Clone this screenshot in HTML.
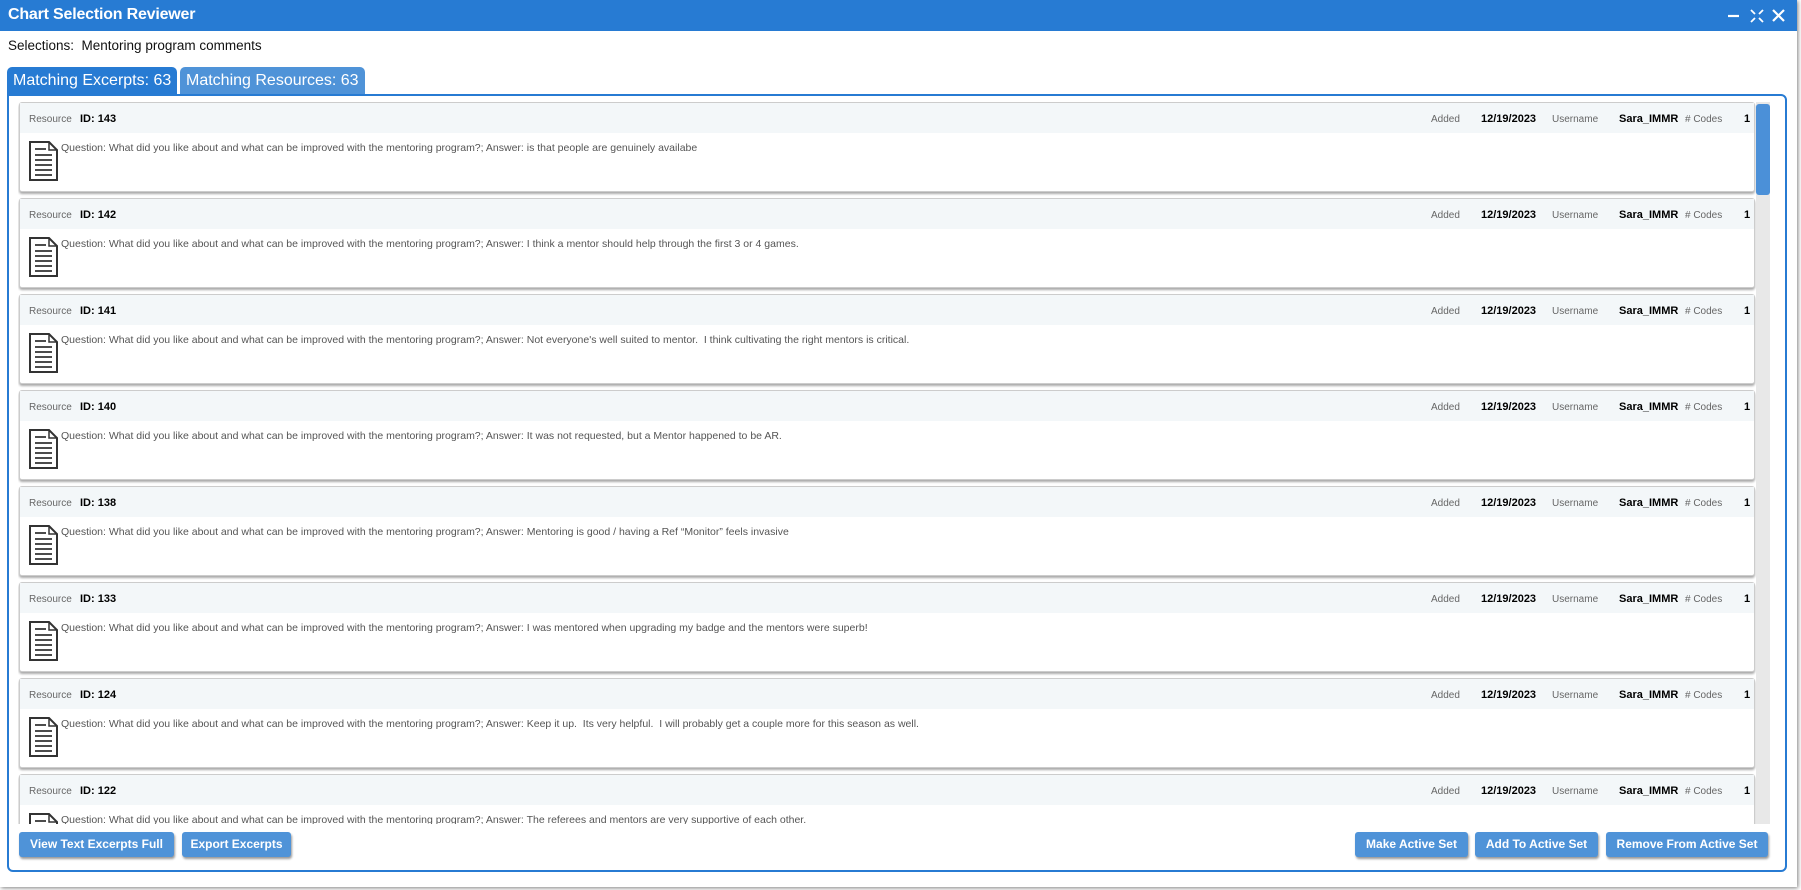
<!DOCTYPE html>
<html><head><meta charset="utf-8"><style>
*{box-sizing:border-box;margin:0;padding:0}
body{width:1801px;height:890px;overflow:hidden;background:#fff;font-family:"Liberation Sans",Arial,sans-serif;position:relative}
.dlg{position:absolute;left:0;top:0;width:1797px;height:887px;background:#fff;box-shadow:1px 1px 4px rgba(0,0,0,.5)}
.title{position:absolute;left:0;top:0;width:1797px;height:31px;background:#277bd3;color:#fff;font-size:16px;font-weight:bold;line-height:29px;padding-left:8px;letter-spacing:-0.2px}
.sel{position:absolute;left:8px;top:38px;font-size:13.5px;color:#111}
.tab{position:absolute;top:67px;height:27px;color:#fff;font-size:16px;line-height:28px;padding-left:6px;border-radius:5px 5px 0 0;white-space:nowrap}
.panel{position:absolute;left:7px;top:94px;width:1780px;height:778px;border:2px solid #277bd3;border-radius:0 6px 6px 6px}
.list{position:absolute;left:18px;top:102px;width:1738px;height:722px;overflow:hidden}
.card{position:absolute;left:1px;width:1736px;height:90px;border:1px solid #ccc;border-radius:3px;box-shadow:0 2px 2px #aaa;background:#fff}
.hd{height:30px;background:#f3f7f9;position:relative;font-size:10px;color:#666}
.hd span{position:absolute;top:11px}
.hd b{position:absolute;top:10px;font-size:11px;color:#000}
.q{position:absolute;left:41px;top:39px;font-size:10.5px;color:#555}
.ic{position:absolute;left:9px;top:38px}
.sb{position:absolute;left:1756px;top:102px;width:14px;height:722px;background:#e8e8e8}
.th{position:absolute;left:1756px;top:104px;width:14px;height:91px;background:#4b90d8;border-radius:3px}
.btn{position:absolute;top:832px;height:25px;background:#4f93d8;color:#fff;font-size:12px;font-weight:bold;line-height:25px;text-align:center;border-radius:3px;box-shadow:1px 2px 2px #999;white-space:nowrap}
</style></head><body>
<div class="dlg">
<div class="title">Chart Selection Reviewer
<svg style="position:absolute;left:1727px;top:8px" width="60" height="16" viewBox="0 0 60 16" stroke="#fff" stroke-width="2.2" fill="none"><path d="M1 8h11"/><path d="M24 2l4 4M36 2l-4 4M24 14l4-4M36 14l-4-4" stroke-width="1.8"/><path d="M46 2l11 11M57 2L46 13"/></svg></div>
<div class="sel">Selections:&nbsp; Mentoring program comments</div>
<div class="tab" style="left:7px;width:170px;background:#277bd3">Matching Excerpts: 63</div>
<div class="tab" style="left:180px;width:185px;background:#4f93d8">Matching Resources: 63</div>
<div class="panel"></div>
<div class="list">
</div>
<div class="sb"></div><div class="th"></div>
<div class="btn" style="left:19px;width:155px">View Text Excerpts Full</div>
<div class="btn" style="left:182px;width:109px">Export Excerpts</div>
<div class="btn" style="left:1355px;width:113px">Make Active Set</div>
<div class="btn" style="left:1475px;width:123px">Add To Active Set</div>
<div class="btn" style="left:1606px;width:162px">Remove From Active Set</div>
</div>
<script>
var d=[["143","is that people are genuinely availabe"],["142","I think a mentor should help through the first 3 or 4 games."],["141","Not everyone's well suited to mentor.&nbsp; I think cultivating the right mentors is critical."],["140","It was not requested, but a Mentor happened to be AR."],["138","Mentoring is good / having a Ref \u201cMonitor\u201d feels invasive"],["133","I was mentored when upgrading my badge and the mentors were superb!"],["124","Keep it up.&nbsp; Its very helpful.&nbsp; I will probably get a couple more for this season as well."],["122","The referees and mentors are very supportive of each other."]];
var h="";
d.forEach(function(r,i){h+='<div class="card" style="top:'+(96*i)+'px"><div class="hd"><span style="left:9px">Resource</span><b style="left:60px">ID: '+r[0]+'</b><span style="left:1411px">Added</span><b style="left:1461px">12/19/2023</b><span style="left:1532px">Username</span><b style="left:1599px">Sara_IMMR</b><span style="left:1665px"># Codes</span><b style="left:1724px">1</b></div>'+
'<svg class="ic" width="29" height="40" viewBox="0 0 29 40" fill="none" stroke="#333" stroke-width="2"><path d="M1 1h19l8 8v30H1z"/><path d="M20 1v8h8" stroke-width="1.5"/><path d="M6 8h11M6 14h17M6 19h17M6 24h17M6 29h17M6 34h17" stroke-width="1.8"/></svg>'+
'<div class="q">Question: What did you like about and what can be improved with the mentoring program?; Answer: '+r[1]+'</div></div>';});
document.querySelector('.list').innerHTML=h;
</script>
</body></html>
